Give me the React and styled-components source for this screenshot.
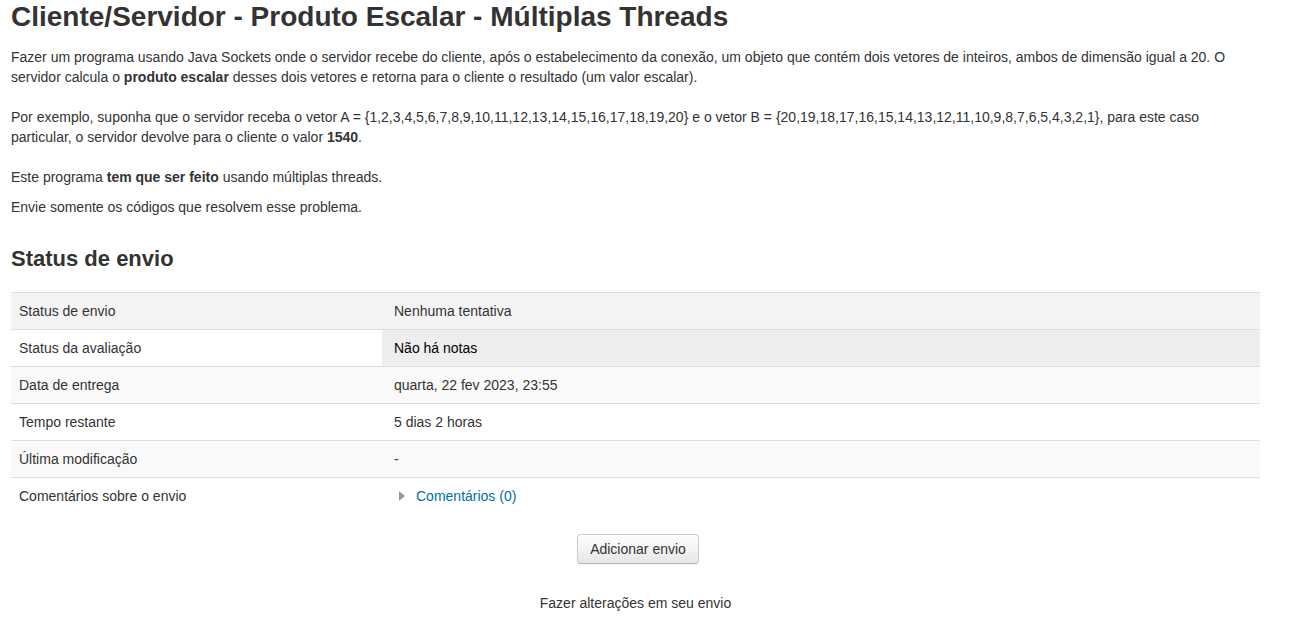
import styled, { createGlobalStyle } from 'styled-components';

const GlobalStyle = createGlobalStyle`
  body {
    margin: 0;
    background: #fff;
    font-family: "Liberation Sans", Arial, sans-serif;
    font-size: 14px;
    line-height: 20px;
    color: #333;
  }
`;

const rows = [
    { label: 'Status de envio', value: 'Nenhuma tentativa' },
    { label: 'Status da avaliação', value: 'Não há notas', highlight: true },
    { label: 'Data de entrega', value: 'quarta, 22 fev 2023, 23:55' },
    { label: 'Tempo restante', value: '5 dias 2 horas' },
    { label: 'Última modificação', value: '-' },
    { label: 'Comentários sobre o envio', comments: true },
];

function App() {
    return (
        <Page>
          <GlobalStyle />
          <Title>Cliente/Servidor - Produto Escalar - Múltiplas Threads</Title>

          <Intro>
            <p>
              Fazer um programa usando Java Sockets onde o servidor recebe do cliente, após o estabelecimento da conexão, um objeto que contém dois vetores de inteiros, ambos de dimensão igual a 20. O servidor calcula o <b>produto escalar</b> desses dois vetores e retorna para o cliente o resultado (um valor escalar).
            </p>
            <Spacer />
            <p>
              Por exemplo, suponha que o servidor receba o vetor A = {'{'}1,2,3,4,5,6,7,8,9,10,11,12,13,14,15,16,17,18,19,20{'}'} e o vetor B = {'{'}20,19,18,17,16,15,14,13,12,11,10,9,8,7,6,5,4,3,2,1{'}'}, para este caso particular, o servidor devolve para o cliente o valor <b>1540</b>.
            </p>
            <Spacer />
            <p>Este programa <b>tem que ser feito</b> usando múltiplas threads.</p>
            <p>Envie somente os códigos que resolvem esse problema.</p>
          </Intro>

          <SubTitle>Status de envio</SubTitle>

          <StatusTable>
            <tbody>
            {
                rows.map((row, i) => (
                    <Row key={row.label} index={i}>
                      <Cell>{row.label}</Cell>
                      <Cell highlight={row.highlight}>
                        {row.comments ? (
                            <Comments>
                              <Caret />
                              <a href="#">Comentários (0)</a>
                            </Comments>
                        ) : row.value}
                      </Cell>
                    </Row>
                ))
            }
            </tbody>
          </StatusTable>

          <Actions>
            <Button>Adicionar envio</Button>
            <Hint>Fazer alterações em seu envio</Hint>
          </Actions>
        </Page>
    )
}

const Page = styled.div`
  padding: 0 34px 0 11px;
  width: 1249px;
`;

const Title = styled.h2`
  margin: 0;
  padding-top: 1px;
  font-size: 28px;
  line-height: 31px;
  font-weight: bold;
  color: #333;
`;

const Intro = styled.div`
  margin-top: 15px;

  p {
    margin: 0 0 10px 0;
  }
  b {
    font-weight: bold;
  }
`;

const Spacer = styled.div`
  height: 10px;
`;

const SubTitle = styled.h3`
  margin: 30px 0 0 0;
  font-size: 22px;
  line-height: 24px;
  font-weight: bold;
  color: #333;
`;

const StatusTable = styled.table`
  margin-top: 21px;
  width: 1249px;
  border-collapse: collapse;
  border-spacing: 0;
`;

const Row = styled.tr`
  background: ${p => p.index === 0 ? '#f4f4f4' : p.index % 2 === 0 ? '#f9f9f9' : '#fff'};

  td {
    border-top: 1px solid #ddd;
  }
`;

const Cell = styled.td`
  padding: 8px;
  height: 20px;
  vertical-align: top;
  background: ${p => p.highlight ? '#eee' : 'transparent'};
  color: ${p => p.highlight ? '#000' : '#333'};

  &:first-child {
    width: 355px;
  }
  &:last-child {
    padding-left: 12px;
  }
`;

const Comments = styled.div`
  display: flex;
  align-items: center;

  a {
    color: #0070a8;
    text-decoration: none;
  }
`;

const Caret = styled.span`
  display: inline-block;
  width: 0;
  height: 0;
  border-top: 5px solid transparent;
  border-bottom: 5px solid transparent;
  border-left: 6px solid #999;
  margin: 0 11px 0 5px;
`;

const Actions = styled.div`
  display: flex;
  flex-direction: column;
  align-items: center;
  margin-top: 20px;
`;

const Button = styled.button`
  font-family: "Liberation Sans", Arial, sans-serif;
  font-size: 14px;
  line-height: 20px;
  color: #333;
  padding: 4px 12px;
  height: 30px;
  border: 1px solid #ccc;
  border-bottom-color: #b3b3b3;
  border-radius: 4px;
  background: linear-gradient(to bottom, #fff, #e6e6e6);
  box-shadow: inset 0 1px 0 rgba(255,255,255,.2), 0 1px 2px rgba(0,0,0,.05);
  cursor: pointer;
  margin-left: 5px;
`;

const Hint = styled.div`
  margin-top: 29px;
  color: #333;
`;

export default App
